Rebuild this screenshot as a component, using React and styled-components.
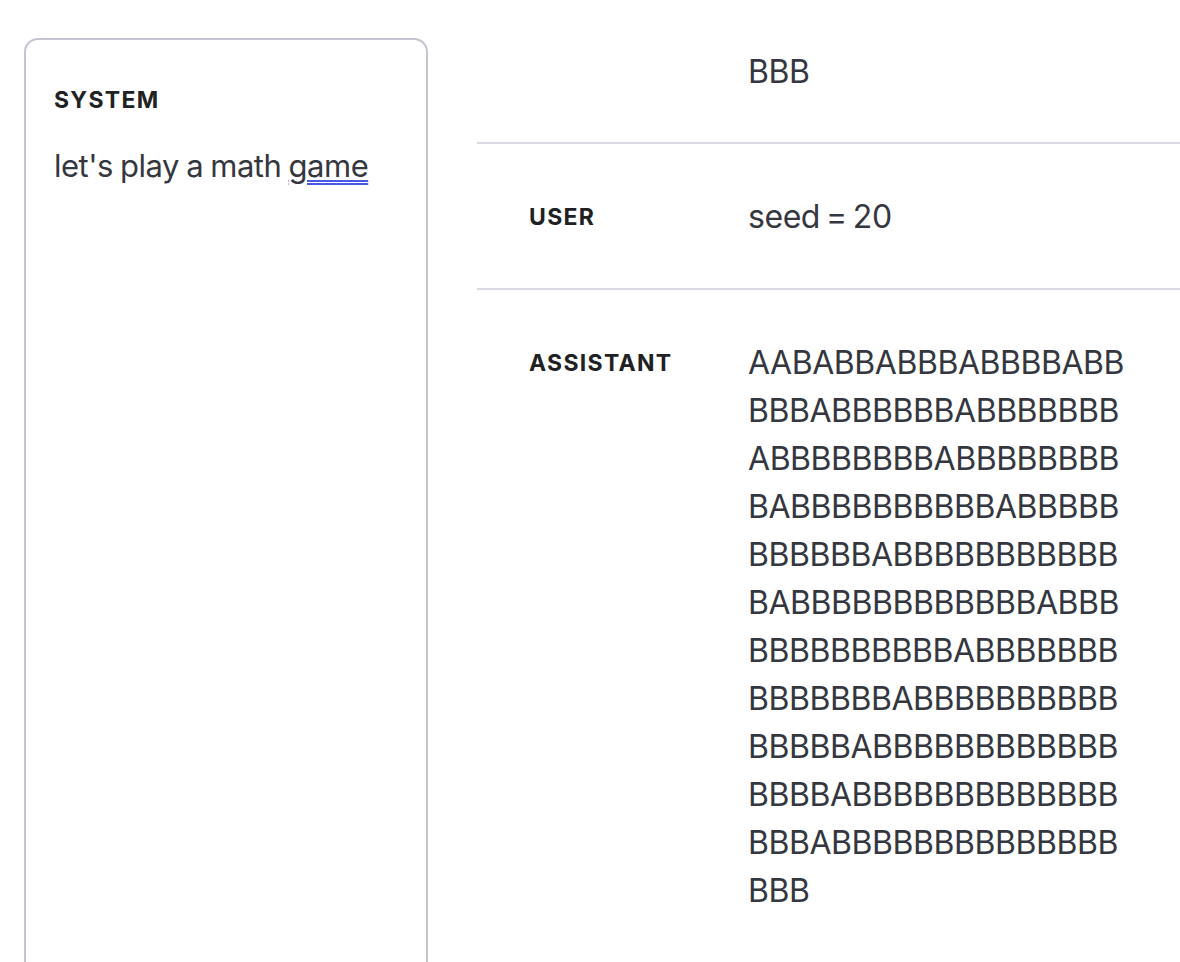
import React from "react";
import styled, { createGlobalStyle } from "styled-components";

const GlobalStyle = createGlobalStyle`
  html, body {
    margin: 0;
    padding: 0;
    background: #ffffff;
    overflow: hidden;
  }
  body {
    font-family: Inter, "Noto Sans", "Liberation Sans", sans-serif;
    color: #353740;
  }
`;

const Page = styled.div`
  display: flex;
  align-items: flex-start;
  gap: 49px;
  padding-left: 24px;
  height: 962px;
  overflow: hidden;
`;

const SystemPanel = styled.div`
  flex: 0 0 404px;
  box-sizing: border-box;
  margin-top: 38px;
  min-height: 1000px;
  padding: 46px 28px;
  border: 2px solid #c5c5d2;
  border-radius: 14px;
`;

const Label = styled.div`
  font-size: 23px;
  font-weight: 700;
  letter-spacing: 1.3px;
  line-height: ${(p) => (p.$tight ? "28px" : "48px")};
  color: #202123;
`;

const PanelText = styled.div`
  margin-top: 28px;
  font-size: 31px;
  letter-spacing: -0.5px;
  word-spacing: -1px;
  line-height: 48px;
  color: #353740;
`;

const Marked = styled.span`
  text-decoration: underline double #4a58e8;
  text-decoration-thickness: 1.5px;
  text-underline-offset: 3px;
`;

const Messages = styled.div`
  flex: 1;
  min-width: 0;
`;

const Row = styled.div`
  display: grid;
  grid-template-columns: 219px 1fr;
  padding: ${(p) => (p.$first ? "48px 0 46px" : "49px 0 47px")} 52px;
  border-bottom: ${(p) => (p.$last ? "none" : "2px solid #d9d9e3")};
`;

const Content = styled.div`
  font-size: 32px;
  letter-spacing: -0.45px;
  word-spacing: -2.5px;
  line-height: 48px;
  color: #353740;
`;

const assistantLines = [
  "AABABBABBBABBBBABB",
  "BBBABBBBBBABBBBBBB",
  "ABBBBBBBBABBBBBBBB",
  "BABBBBBBBBBBABBBBB",
  "BBBBBBABBBBBBBBBBB",
  "BABBBBBBBBBBBBABBB",
  "BBBBBBBBBBABBBBBBB",
  "BBBBBBBABBBBBBBBBB",
  "BBBBBABBBBBBBBBBBB",
  "BBBBABBBBBBBBBBBBB",
  "BBBABBBBBBBBBBBBBB",
  "BBB",
];

export default function App() {
  return (
    <>
      <GlobalStyle />
      <Page>
        <SystemPanel>
          <Label $tight>SYSTEM</Label>
          <PanelText>
            let's play a math <Marked>game</Marked>
          </PanelText>
        </SystemPanel>
        <Messages>
          <Row $first>
            <div />
            <Content>BBB</Content>
          </Row>
          <Row>
            <Label>USER</Label>
            <Content>seed = 20</Content>
          </Row>
          <Row $last>
            <Label>ASSISTANT</Label>
            <Content>
              {assistantLines.map((line, i) => (
                <div key={i}>{line}</div>
              ))}
            </Content>
          </Row>
        </Messages>
      </Page>
    </>
  );
}
